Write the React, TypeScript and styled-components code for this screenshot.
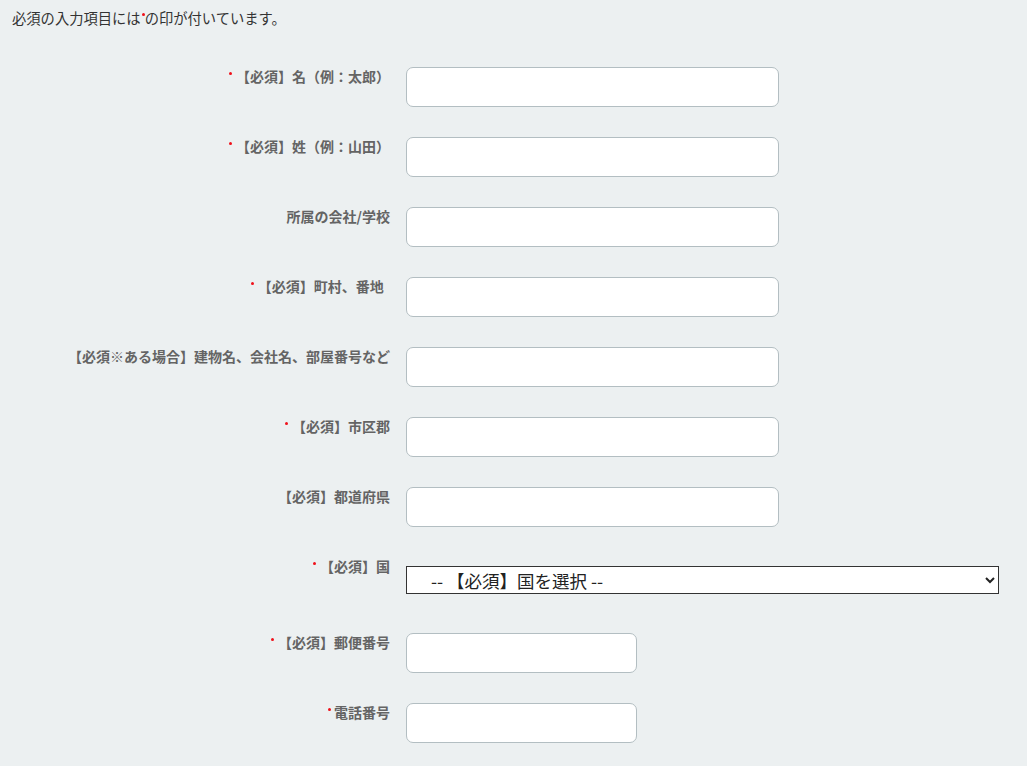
import React from "react";
import styled, { createGlobalStyle } from "styled-components";

const GlobalStyle = createGlobalStyle`
  html, body {
    margin: 0;
    padding: 0;
    background: #ecf0f1;
  }
  body {
    font-family: "Noto Sans CJK JP", "Noto Sans", sans-serif;
  }
`;

const Page = styled.div`
  padding: 8px 12px 20px 12px;
  min-height: 766px;
  box-sizing: border-box;
`;

const Note = styled.p`
  margin: 0;
  font-size: 14.3px;
  line-height: 20px;
  color: #333;
`;

const Mark = styled.span<{ $gap?: number }>`
  display: inline-block;
  width: 3px;
  height: 3px;
  border-radius: 50%;
  background: #f0101a;
  vertical-align: top;
  margin: ${(p) => `5px ${p.$gap ?? 1}px 0 1px`};
`;

const Form = styled.form`
  margin-top: 39px;
  display: flex;
  flex-direction: column;
`;

const Row = styled.div<{ $tall?: boolean }>`
  display: grid;
  grid-template-columns: 378px 1fr;
  column-gap: 16px;
  align-items: start;
  min-height: ${(p) => (p.$tall ? "46px" : "40px")};
  margin-bottom: 30px;
`;

const Label = styled.label`
  text-align: right;
  font-size: 14px;
  font-weight: bold;
  line-height: 18px;
  padding-top: 0;
  color: #646464;
  white-space: nowrap;
`;

const TextInput = styled.input<{ $w?: number }>`
  box-sizing: border-box;
  width: ${(p) => p.$w ?? 373}px;
  height: 40px;
  background: #fff;
  border: 1px solid #b3bec2;
  border-radius: 7px;
  padding: 0 10px;
  font-size: 14px;
  outline: none;
`;

const Select = styled.select`
  box-sizing: border-box;
  width: 593px;
  height: 28px;
  margin-top: 9px;
  background: #fff;
  border: 1px solid #333;
  border-radius: 0;
  padding: 0 4px 0 20px;
  font-family: "Noto Sans CJK JP", "Noto Sans", sans-serif;
  font-size: 17.5px;
  color: #222;
`;

type Field = { label: string; req: boolean };

const fields: Field[] = [
  { label: "【必須】名（例：太郎）", req: true },
  { label: "【必須】姓（例：山田）", req: true },
  { label: "所属の会社/学校", req: false },
  { label: "【必須】町村、番地\u00a0\u00a0", req: true },
  { label: "【必須※ある場合】建物名、会社名、部屋番号など", req: false },
  { label: "【必須】市区郡", req: true },
  { label: "【必須】都道府県", req: false },
];

export default function App() {
  return (
    <>
      <GlobalStyle />
      <Page>
        <Note>
          必須の入力項目には<Mark $gap={0} />の印が付いています。
        </Note>
        <Form onSubmit={(e) => e.preventDefault()}>
          {fields.map((f, i) => (
            <Row key={i}>
              <Label>
                {f.req && <Mark $gap={4} />}
                {f.label}
              </Label>
              <TextInput type="text" />
            </Row>
          ))}
          <Row $tall>
            <Label>
              <Mark $gap={4} />
              【必須】国
            </Label>
            <Select defaultValue="">
              <option value="">-- 【必須】国を選択 --</option>
              <option value="jp">日本</option>
            </Select>
          </Row>
          <Row>
            <Label>
              <Mark $gap={4} />
              【必須】郵便番号
            </Label>
            <TextInput type="text" $w={231} />
          </Row>
          <Row>
            <Label>
              <Mark $gap={3} />
              電話番号
            </Label>
            <TextInput type="text" $w={231} />
          </Row>
        </Form>
      </Page>
    </>
  );
}
